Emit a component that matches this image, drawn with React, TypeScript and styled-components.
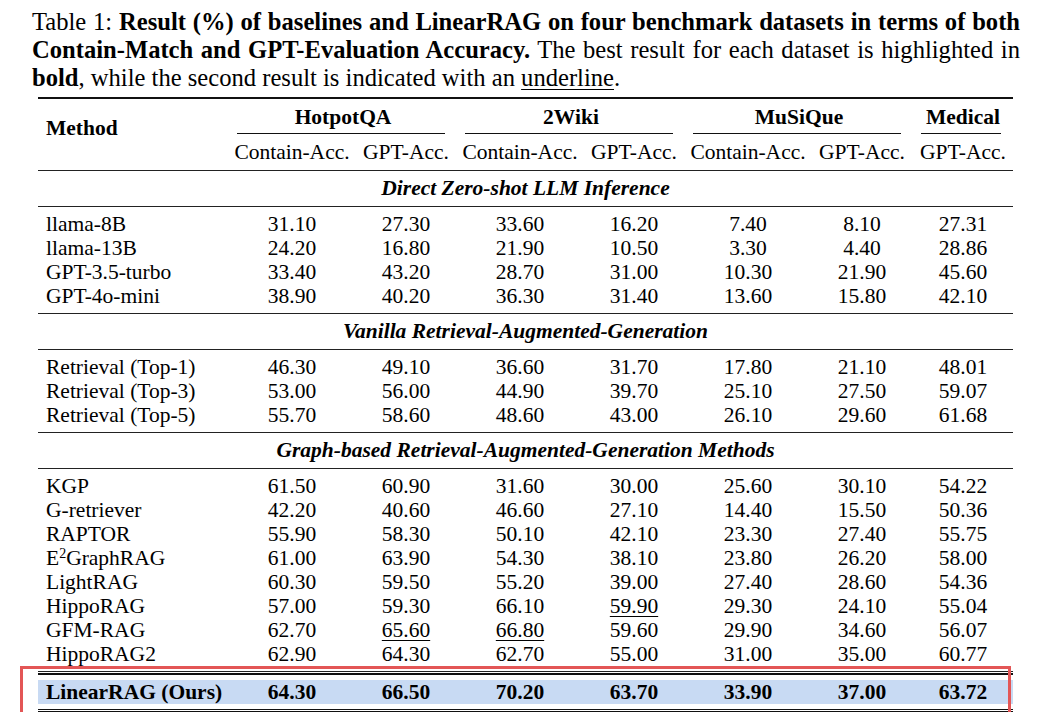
import React from "react";
import styled, { createGlobalStyle } from "styled-components";

const GlobalStyle = createGlobalStyle`
  html, body {
    margin: 0;
    padding: 0;
    background: #fff;
  }
  body {
    font-family: "Liberation Serif", "Times New Roman", serif;
    color: #000;
  }
`;

const COLS = "191px 126px 102px 126px 102px 126px 102px 100px";

const Page = styled.div`
  padding-top: 8px;
  font-size: 21.5px;
`;

const Caption = styled.div`
  width: 988px;
  margin-left: 32px;
  font-size: 24.6px;
`;

const CaptionLine = styled.div<{ $justify?: boolean }>`
  height: 28px;
  line-height: 28px;
  white-space: nowrap;
  text-align: ${(p) => (p.$justify ? "justify" : "left")};
  text-align-last: ${(p) => (p.$justify ? "justify" : "left")};
`;

const Under = styled.span`
  text-decoration: underline;
  text-decoration-thickness: 1px;
  text-underline-offset: 3px;
`;

const Table = styled.div`
  width: 975px;
  margin-left: 38px;
  margin-top: 5px;
  border-top: 2px solid #111;
`;

const Header = styled.div`
  display: grid;
  grid-template-columns: ${COLS};
  grid-template-rows: 24px 11px 24px;
  padding: 6px 0;
  line-height: 24px;
  border-bottom: 1px solid #222;
`;

const MethodHead = styled.div`
  grid-row: 1 / 4;
  grid-column: 1;
  align-self: start;
  margin-top: 11px;
  padding-left: 8px;
  font-weight: bold;
`;

const GroupHead = styled.div<{ $col: number; $span: number }>`
  grid-row: 1;
  grid-column: ${(p) => p.$col} / span ${(p) => p.$span};
  text-align: center;
  font-weight: bold;
`;

const CmidRule = styled.div<{ $col: number; $span: number }>`
  grid-row: 2;
  grid-column: ${(p) => p.$col} / span ${(p) => p.$span};
  align-self: start;
  margin: 4px 12px 0 8px;
  border-top: 1px solid #111;
`;

const SubHead = styled.div<{ $col: number }>`
  grid-row: 3;
  grid-column: ${(p) => p.$col};
  text-align: center;
  white-space: nowrap;
`;

const SectionTitle = styled.div`
  padding: 5px 0 6px;
  line-height: 24px;
  text-align: center;
  font-weight: bold;
  font-style: italic;
  border-bottom: 1px solid #222;
`;

const Group = styled.div`
  padding: 5px 0;
  border-bottom: 1px solid #222;
`;

const Row = styled.div<{ $bold?: boolean; $highlight?: boolean }>`
  display: grid;
  grid-template-columns: ${COLS};
  height: 24px;
  line-height: 24px;
  font-weight: ${(p) => (p.$bold ? "bold" : "normal")};
  background: ${(p) => (p.$highlight ? "#c8daf3" : "transparent")};
`;

const NameCell = styled.div`
  padding-left: 8px;
  white-space: nowrap;
`;

const NumCell = styled.div`
  text-align: center;
`;

const Sup = styled.sup`
  font-size: 14px;
  line-height: 0;
  vertical-align: 7px;
`;

const Final = styled.div`
  position: relative;
  margin-top: 1px;
  border-top: 2px solid #111;
  border-bottom: 3px double #111;
  padding: 5px 0 5px;
`;

const RedBox = styled.div`
  position: absolute;
  left: -18px;
  right: 2px;
  top: -9px;
  bottom: -11px;
  border: 3px solid #e35656;
  pointer-events: none;
`;

type Section = { title: string; rows: string[][] };

const sections: Section[] = [
  {
    title: "Direct Zero-shot LLM Inference",
    rows: [
      ["llama-8B", "31.10", "27.30", "33.60", "16.20", "7.40", "8.10", "27.31"],
      ["llama-13B", "24.20", "16.80", "21.90", "10.50", "3.30", "4.40", "28.86"],
      ["GPT-3.5-turbo", "33.40", "43.20", "28.70", "31.00", "10.30", "21.90", "45.60"],
      ["GPT-4o-mini", "38.90", "40.20", "36.30", "31.40", "13.60", "15.80", "42.10"],
    ],
  },
  {
    title: "Vanilla Retrieval-Augmented-Generation",
    rows: [
      ["Retrieval (Top-1)", "46.30", "49.10", "36.60", "31.70", "17.80", "21.10", "48.01"],
      ["Retrieval (Top-3)", "53.00", "56.00", "44.90", "39.70", "25.10", "27.50", "59.07"],
      ["Retrieval (Top-5)", "55.70", "58.60", "48.60", "43.00", "26.10", "29.60", "61.68"],
    ],
  },
  {
    title: "Graph-based Retrieval-Augmented-Generation Methods",
    rows: [
      ["KGP", "61.50", "60.90", "31.60", "30.00", "25.60", "30.10", "54.22"],
      ["G-retriever", "42.20", "40.60", "46.60", "27.10", "14.40", "15.50", "50.36"],
      ["RAPTOR", "55.90", "58.30", "50.10", "42.10", "23.30", "27.40", "55.75"],
      ["E^2GraphRAG", "61.00", "63.90", "54.30", "38.10", "23.80", "26.20", "58.00"],
      ["LightRAG", "60.30", "59.50", "55.20", "39.00", "27.40", "28.60", "54.36"],
      ["HippoRAG", "57.00", "59.30", "66.10", "_59.90", "29.30", "24.10", "55.04"],
      ["GFM-RAG", "62.70", "_65.60", "_66.80", "59.60", "29.90", "34.60", "56.07"],
      ["HippoRAG2", "62.90", "64.30", "62.70", "55.00", "31.00", "35.00", "60.77"],
    ],
  },
];

const ours = ["LinearRAG (Ours)", "64.30", "66.50", "70.20", "63.70", "33.90", "37.00", "63.72"];

const subHeads = [
  "Contain-Acc.",
  "GPT-Acc.",
  "Contain-Acc.",
  "GPT-Acc.",
  "Contain-Acc.",
  "GPT-Acc.",
  "GPT-Acc.",
];

const groups = [
  { name: "HotpotQA", col: 2, span: 2 },
  { name: "2Wiki", col: 4, span: 2 },
  { name: "MuSiQue", col: 6, span: 2 },
  { name: "Medical", col: 8, span: 1 },
];

const renderName = (name: string) => {
  if (name.startsWith("E^2")) {
    return (
      <>
        E<Sup>2</Sup>
        {name.slice(3)}
      </>
    );
  }
  return name;
};

const renderNum = (v: string) =>
  v.startsWith("_") ? <Under>{v.slice(1)}</Under> : v;

const DataRow = ({ row, bold, highlight }: { row: string[]; bold?: boolean; highlight?: boolean }) => (
  <Row $bold={bold} $highlight={highlight}>
    <NameCell>{renderName(row[0])}</NameCell>
    {row.slice(1).map((v, i) => (
      <NumCell key={i}>{renderNum(v)}</NumCell>
    ))}
  </Row>
);

export default function App() {
  return (
    <>
      <GlobalStyle />
      <Page>
        <Caption>
          <CaptionLine $justify>
            Table 1: <b>Result (%) of baselines and LinearRAG on four benchmark datasets in terms of both</b>
          </CaptionLine>
          <CaptionLine $justify>
            <b>Contain-Match and GPT-Evaluation Accuracy.</b> The best result for each dataset is highlighted in
          </CaptionLine>
          <CaptionLine>
            <b>bold</b>, while the second result is indicated with an <Under>underline</Under>.
          </CaptionLine>
        </Caption>

        <Table>
          <Header>
            <MethodHead>Method</MethodHead>
            {groups.map((g) => (
              <React.Fragment key={g.name}>
                <GroupHead $col={g.col} $span={g.span}>
                  {g.name}
                </GroupHead>
                <CmidRule $col={g.col} $span={g.span} />
              </React.Fragment>
            ))}
            {subHeads.map((s, i) => (
              <SubHead key={i} $col={i + 2}>
                {s}
              </SubHead>
            ))}
          </Header>

          {sections.map((s) => (
            <React.Fragment key={s.title}>
              <SectionTitle>{s.title}</SectionTitle>
              <Group>
                {s.rows.map((r) => (
                  <DataRow key={r[0]} row={r} />
                ))}
              </Group>
            </React.Fragment>
          ))}

          <Final>
            <DataRow row={ours} bold highlight />
            <RedBox />
          </Final>
        </Table>
      </Page>
    </>
  );
}
